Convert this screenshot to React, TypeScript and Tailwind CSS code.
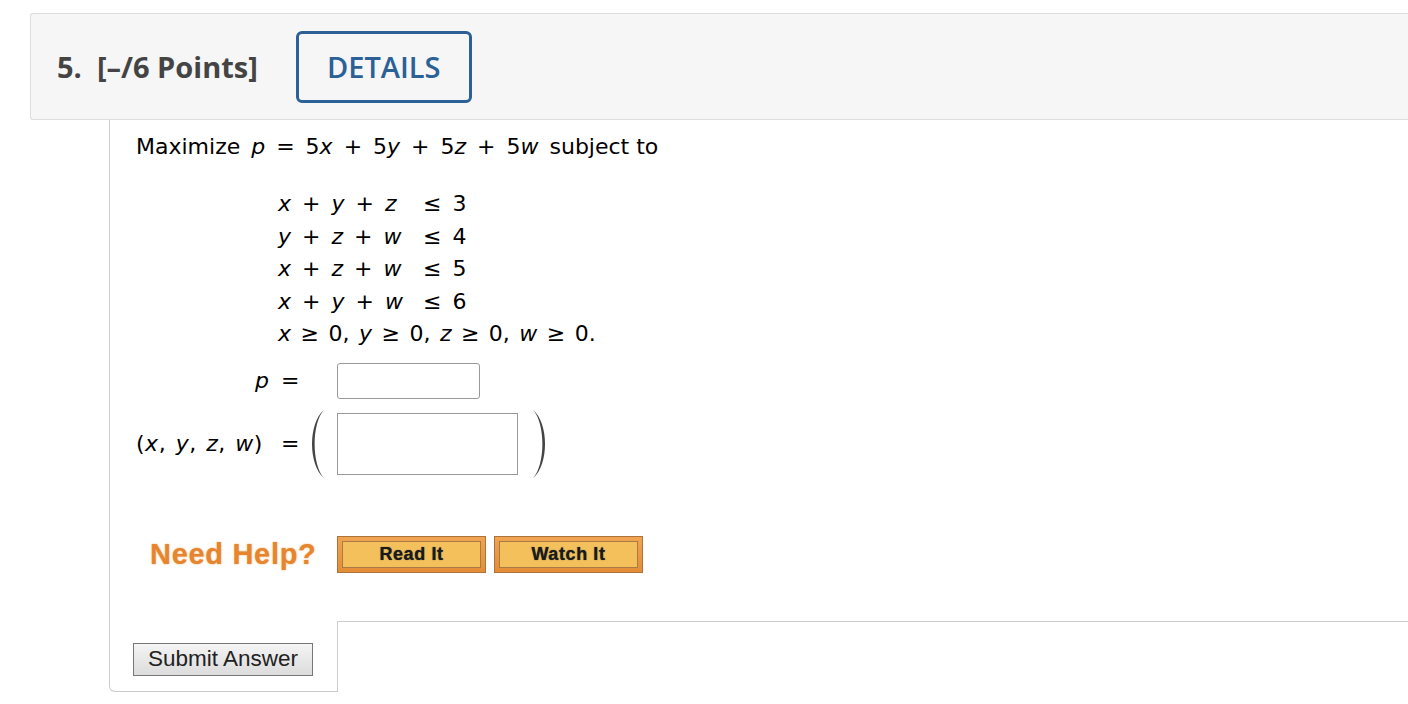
import React from "react";

const sans = "font-['Open_Sans',sans-serif]";
const math = "font-['DejaVu_Sans',Verdana,sans-serif]";

function V({ children }: { children: React.ReactNode }) {
  return <i className="italic">{children}</i>;
}

function Paren({ right }: { right?: boolean }) {
  return (
    <svg width="16" height="70" viewBox="0 0 16 70" className={right ? "-scale-x-100" : ""}>
      <path d="M15 1 C-1 14 -1 56 15 69 C2.5 56 2.5 14 15 1 Z" fill="#444444" />
    </svg>
  );
}

function HelpButton({ label }: { label: string }) {
  return (
    <button className="h-[37px] w-[149px] border border-[#ad733a] bg-gradient-to-b from-[#f0a452] to-[#e38d36] p-[4px]">
      <span className="flex h-full w-full items-center justify-center border border-[#a97a45] bg-[#f3c05c] font-['Liberation_Sans',Arial,sans-serif] text-[18px] font-bold tracking-[0.6px] text-[#1a1a1a] [text-shadow:0_0_1px_#333]">
        {label}
      </span>
    </button>
  );
}

export default function App() {
  return (
    <div className="min-h-[704px] bg-white pt-[13px]">
      <div className="ml-[30px] flex h-[107px] items-center rounded-l-[3px] border border-r-0 border-[#dddddd] bg-[#f6f6f6] pl-[26px]">
        <h2 className={`${sans} text-[29px] font-bold text-[#444444]`}>
          5.&nbsp; [–/6 Points]
        </h2>
        <button
          className={`${sans} ml-[38px] flex h-[72px] w-[176px] items-center justify-center rounded-[6px] border-[3px] border-[#2b6196] text-[29px] font-semibold text-[#2b6196]`}
        >
          DETAILS
        </button>
      </div>

      <div className="ml-[109px] flex flex-col">
        <div className={`${math} h-[501px] border-l border-[#cccccc] pl-[26px] pt-[12px] text-[22px] text-black`}>
          <p className="leading-[30px] [word-spacing:4px]">
            Maximize <V>p</V> = 5<V>x</V> + 5<V>y</V> + 5<V>z</V> + 5<V>w</V>{" "}
            <span className="[word-spacing:0]">subject to</span>
          </p>

          <div className="ml-[142px] mt-[26px] leading-[32.5px] [word-spacing:4px]">
            <div className="flex">
              <span className="w-[145px] whitespace-pre"><V>x</V> + <V>y</V> + <V>z</V></span>
              <span>≤ 3</span>
            </div>
            <div className="flex">
              <span className="w-[145px] whitespace-pre"><V>y</V> + <V>z</V> + <V>w</V></span>
              <span>≤ 4</span>
            </div>
            <div className="flex">
              <span className="w-[145px] whitespace-pre"><V>x</V> + <V>z</V> + <V>w</V></span>
              <span>≤ 5</span>
            </div>
            <div className="flex">
              <span className="w-[145px] whitespace-pre"><V>x</V> + <V>y</V> + <V>w</V></span>
              <span>≤ 6</span>
            </div>
            <div className="[word-spacing:2.5px]">
              <V>x</V> ≥ 0, <V>y</V> ≥ 0, <V>z</V> ≥ 0, <V>w</V> ≥ 0.
            </div>
          </div>

          <div className="mt-[12px] flex items-center">
            <span className="w-[133px] text-right"><V>p</V></span>
            <span className="w-[40px] pl-[12px]">=</span>
            <span className="w-[28px]" />
            <input className="h-[36px] w-[143px] rounded-[3px] border border-[#999999] bg-white" />
          </div>

          <div className="mt-[10px] flex items-center">
            <span className="w-[133px] whitespace-pre tracking-[0.5px] [word-spacing:2px]">(<V>x</V>, <V>y</V>, <V>z</V>, <V>w</V>)</span>
            <span className="w-[40px] pl-[12px]">=</span>
            <span className="flex w-[28px] justify-start">
              <Paren />
            </span>
            <input className="h-[62px] w-[181px] border border-[#999999] bg-white" />
            <span className="ml-[14px]">
              <Paren right />
            </span>
          </div>

          <div className="mt-[57px] flex items-center">
            <span className="ml-[14px] w-[187px] font-['Liberation_Sans',Arial,sans-serif] text-[29px] font-bold leading-none tracking-[0.7px] text-[#e6852e] [text-shadow:0_0_2px_#f0b070]">
              Need Help?
            </span>
            <div className="flex gap-[8px]">
              <HelpButton label="Read It" />
              <HelpButton label="Watch It" />
            </div>
          </div>
        </div>

        <div className="flex">
          <div className="h-[71px] w-[229px] rounded-bl-[6px] border-b border-l border-r border-[#cccccc] pl-[23px] pt-[22px]">
            <button className="h-[33px] w-[180px] border border-[#777777] bg-gradient-to-b from-[#f4f4f4] to-[#dcdcdc] font-['Liberation_Sans',Arial,sans-serif] text-[22.5px] leading-none text-[#222222]">
              Submit Answer
            </button>
          </div>
          <div className="flex-1 border-t border-[#cccccc]" />
        </div>
      </div>
    </div>
  );
}
